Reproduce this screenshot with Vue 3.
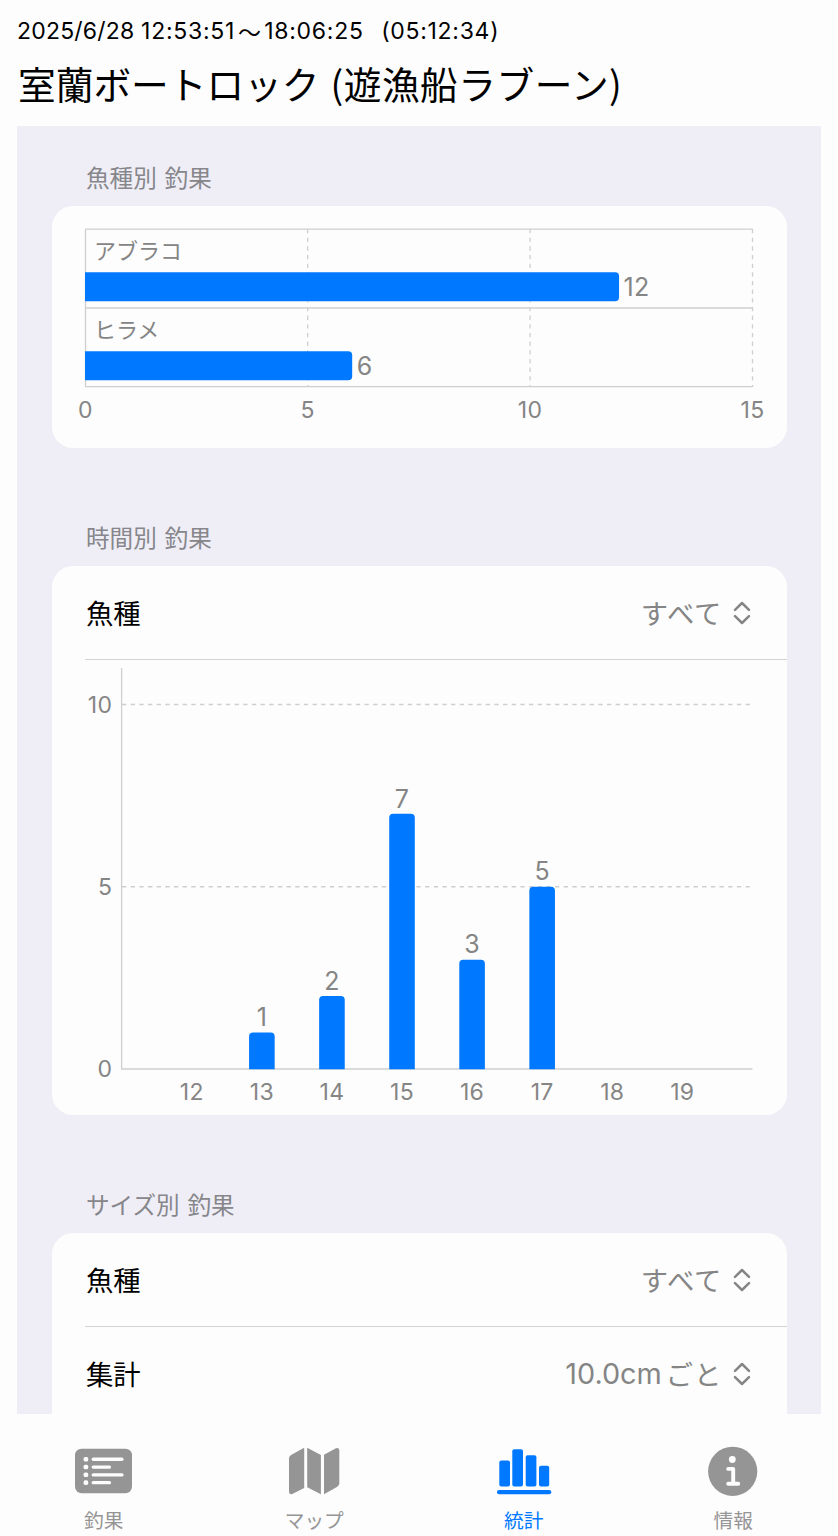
<template>
  <div class="page">

    <!-- Trip header -->
    <header class="header">
      <p class="period">
        <span>2025/6/28 </span><span class="time">12:53:51</span><span class="wave">〜</span><span class="time">18:06:25</span>
        <span class="time duration">(05:12:34)</span>
      </p>
      <h1 class="title">室蘭ボートロック <span class="boat">(遊漁船ラブーン)</span></h1>
    </header>

    <!-- Statistics -->
    <main class="panel">
      <h2 class="sectionTitle sectionTitleFirst">魚種別 釣果</h2>
      <section class="card">
        <svg class="chart" width="735" height="242" viewBox="0 0 735 242">
          <line
            v-for="t in [5, 10, 15]"
            :key="'g' + t"
            :x1="speciesX(t)"
            :x2="speciesX(t)"
            y1="23"
            y2="181"
            class="dash"
          />
          <path d="M33.5 23.2H700.5M33.5 102H700.5M33.5 180.7H700.5M33.5 23.2V180.7" class="rule" />
          <g v-for="(s, i) in species" :key="s.name">
            <text x="42" :y="53 + i * 79" class="cjk speciesName">{{ s.name }}</text>
            <path :d="hBar(s.count, 66.2 + i * 79)" class="bar" />
            <text :x="speciesX(s.count) + 4.5" :y="90 + i * 79" class="value">{{ s.count }}</text>
          </g>
          <text
            v-for="t in [0, 5, 10, 15]"
            :key="'t' + t"
            :x="speciesX(t)"
            y="211.5"
            class="tick middle"
          >{{ t }}</text>
        </svg>
      </section>

      <h2 class="sectionTitle">時間別 釣果</h2>
      <section class="card">
        <div class="row rowLine">
          <span class="rowLabel">魚種</span>
          <button class="picker">
            <span class="kana">すべて</span>
            <svg class="chevrons" width="18" height="24" viewBox="0 0 18 24">
              <path d="M2 8.8 9 2l7 6.8M2 15.2 9 22l7-6.8" />
            </svg>
          </button>
        </div>
        <svg class="chart" width="735" height="455" viewBox="0 0 735 455">
          <g v-for="t in [0, 5, 10]" :key="'y' + t">
            <line v-if="t" x1="70" x2="698" :y1="hourY(t)" :y2="hourY(t)" class="dash" />
            <text x="60.3" :y="hourY(t) + 8.3" class="tick end">{{ t }}</text>
          </g>
          <path d="M69.6 8V409H700.5" class="rule" />
          <g v-for="(h, i) in hours" :key="h.hour">
            <path v-if="h.count" :d="vBar(h.count, hourX(i))" class="bar" />
            <text v-if="h.count" :x="hourX(i)" :y="hourY(h.count) - 6.3" class="value middle">{{ h.count }}</text>
            <text :x="hourX(i)" y="440" class="tick middle">{{ h.hour }}</text>
          </g>
        </svg>
      </section>

      <h2 class="sectionTitle">サイズ別 釣果</h2>
      <section class="card cardOpen">
        <div class="row rowLine">
          <span class="rowLabel">魚種</span>
          <button class="picker">
            <span class="kana">すべて</span>
            <svg class="chevrons" width="18" height="24" viewBox="0 0 18 24">
              <path d="M2 8.8 9 2l7 6.8M2 15.2 9 22l7-6.8" />
            </svg>
          </button>
        </div>
        <div class="row">
          <span class="rowLabel">集計</span>
          <button class="picker">
            <span class="latin">10.0cm</span>
            <span class="kana">ごと</span>
            <svg class="chevrons" width="18" height="24" viewBox="0 0 18 24">
              <path d="M2 8.8 9 2l7 6.8M2 15.2 9 22l7-6.8" />
            </svg>
          </button>
        </div>
      </section>
    </main>

    <!-- Tab bar -->
    <nav class="tabs">
      <button
        v-for="tab in tabs"
        :key="tab.id"
        :class="['tab', active === tab.id ? 'tabActive' : '']"
        @click="active = tab.id"
      >
        <svg v-if="tab.id === 'list'" width="58" height="54" viewBox="0 0 58 54">
          <rect x="0" y="4.7" width="57" height="44.5" rx="6.5" fill="currentColor" />
          <g fill="#fdfdfd">
            <rect v-for="n in 4" :key="'d' + n" x="8.6" :y="5.1 + n * 7.8" width="4.6" height="4.6" rx="1.6" />
            <rect v-for="n in 4" :key="'l' + n" x="16.6" :y="5.8 + n * 7.8" :width="n % 2 ? 32 : 19.5" height="3.3" rx="1.6" />
          </g>
        </svg>
        <svg v-else-if="tab.id === 'map'" width="58" height="54" viewBox="0 0 58 54">
          <g fill="currentColor">
            <path d="M19.2 3.7V43.9L7.2 49.9Q4 50.9 4 47.7V14.5Q4 12.1 6 11Z" />
            <path d="M22.2 3.7 35.9 10.9V50.3L22.2 43.3Z" />
            <path d="M39 10.8 51 4.2Q54.3 3.2 54.3 6.5V39.2Q54.3 41.5 52.3 42.7L39 50.3Z" />
          </g>
        </svg>
        <svg v-else-if="tab.id === 'stats'" width="58" height="54" viewBox="0 0 58 54">
          <g fill="currentColor">
            <rect x="4.3" y="16.5" width="10.7" height="26" rx="2" />
            <rect x="17.3" y="5.3" width="10.7" height="37.2" rx="2" />
            <rect x="30.7" y="11.2" width="10.7" height="31.3" rx="2" />
            <rect x="44" y="21.8" width="10.2" height="20.7" rx="2" />
            <rect x="2" y="46" width="54.3" height="4.3" rx="2.1" />
          </g>
        </svg>
        <svg v-else width="58" height="54" viewBox="0 0 58 54">
          <circle cx="28.7" cy="27.3" r="24.6" fill="currentColor" />
          <circle cx="28.3" cy="15.5" r="3.4" fill="#fdfdfd" />
          <path
            d="M24.2 24.9H29.2V39.8M24.2 39.8H34.2"
            fill="none"
            stroke="#fdfdfd"
            stroke-width="3.9"
            stroke-linecap="round"
            stroke-linejoin="round"
          />
        </svg>
        <span class="tabLabel">{{ tab.label }}</span>
      </button>
    </nav>

  </div>
</template>

<script setup>
import { ref } from 'vue'

const active = ref('stats')

const tabs = [
  { id: 'list', label: '釣果' },
  { id: 'map', label: 'マップ' },
  { id: 'stats', label: '統計' },
  { id: 'info', label: '情報' },
]

const species = [
  { name: 'アブラコ', count: 12 },
  { name: 'ヒラメ', count: 6 },
]

const hours = [
  { hour: 12, count: 0 },
  { hour: 13, count: 1 },
  { hour: 14, count: 2 },
  { hour: 15, count: 7 },
  { hour: 16, count: 3 },
  { hour: 17, count: 5 },
  { hour: 18, count: 0 },
  { hour: 19, count: 0 },
]

const speciesX = (n) => 33.3 + n * 44.48
const hourX = (i) => 139.8 + i * 70.07
const hourY = (n) => 409 - n * 36.45

// bars are rounded only at the value end
function hBar(count, y) {
  const x = speciesX(count)
  return `M33 ${y}H${x - 4}q4 0 4 4v21q0 4 -4 4H33Z`
}

function vBar(count, x) {
  const y = hourY(count)
  return `M${x - 12.8} 409.3V${y + 4}q0 -4 4 -4h17.6q4 0 4 4V409.3Z`
}
</script>

<style>
body {
  margin: 0;
  background: #fdfdfd;
}
</style>

<style scoped>
.page {
  display: flex;
  flex-direction: column;
  height: 1536px;
  overflow: hidden;
  background: #fdfdfd;
  color: #000;
  font-family: 'Inter', 'Noto Sans CJK JP', sans-serif;
}

/* ─── Header ─────────────────────────────────────────────── */
.header {
  box-sizing: border-box;
  height: 126px;
  flex: none;
  padding: 17px 17px 0;
}

.period {
  display: flex;
  margin: 0;
  font-size: 23px;
  line-height: 28px;
  letter-spacing: 0.2px;
  white-space: pre;
}
.time { letter-spacing: 0.72px; }
.wave {
  margin: 0 3px;
  font-family: 'Noto Sans CJK JP', sans-serif;
}
.duration { margin-left: 17.5px; }

.title {
  margin: 10px 0 0 1px;
  font-family: 'Noto Sans CJK JP', sans-serif;
  font-size: 37.7px;
  font-weight: 400;
  line-height: 56px;
  white-space: nowrap;
  word-spacing: 2.5px;
}
.boat { letter-spacing: 0.5px; }

/* ─── Panel and cards ────────────────────────────────────── */
.panel {
  flex: 1;
  min-height: 0;
  overflow: hidden;
  margin: 0 17px;
  padding: 0 34px 0 35px;
  background: #efeef6;
}

.sectionTitle {
  box-sizing: border-box;
  display: flex;
  align-items: flex-end;
  height: 118px;
  margin: 0;
  padding: 0 0 16px 34px;
  color: #86868b;
  font-family: 'Noto Sans CJK JP', sans-serif;
  font-size: 23.6px;
  font-weight: 400;
  line-height: 26px;
  word-spacing: 2.5px;
}
.sectionTitleFirst { height: 80px; }

.card {
  overflow: hidden;
  border-radius: 21px;
  background: #fdfdfd;
}
.cardOpen { border-radius: 21px 21px 0 0; height: 200px; }

.row {
  display: flex;
  align-items: center;
  justify-content: space-between;
  height: 93px;
  margin-left: 33px;
  padding-right: 36px;
}
.rowLine { border-bottom: 1px solid #d3d3d5; }

.rowLabel {
  padding: 0 0 2px 1px;
  font-family: 'Noto Sans CJK JP', sans-serif;
  font-size: 27.3px;
  line-height: 40px;
}

.picker {
  display: flex;
  align-items: center;
  padding: 0;
  border: 0;
  background: none;
  color: #858585;
  font-size: 27.3px;
  line-height: 40px;
}
.kana {
  padding-bottom: 2px;
  font-family: 'Noto Sans CJK JP', sans-serif;
  letter-spacing: 0.8px;
}
.latin {
  margin-right: 4px;
  font-family: 'Inter', sans-serif;
  font-size: 28.8px;
}
.chevrons {
  margin-left: 11px;
  fill: none;
  stroke: currentColor;
  stroke-width: 2.5;
  stroke-linecap: round;
  stroke-linejoin: round;
}

/* ─── Charts ─────────────────────────────────────────────── */
.chart {
  display: block;
  fill: #858585;
  font-family: 'Inter', sans-serif;
}
.rule { fill: none; stroke: #cfcfcf; stroke-width: 1.3; }
.dash { stroke: #cfcfcf; stroke-width: 1.3; stroke-dasharray: 4.33; }
.bar { fill: #0078ff; }
.tick { font-size: 23px; letter-spacing: 0.3px; }
.value { font-size: 25px; letter-spacing: 0.3px; }
.cjk { font-family: 'Noto Sans CJK JP', sans-serif; }
.speciesName { font-size: 22px; }
.middle { text-anchor: middle; }
.end { text-anchor: end; }

/* ─── Tab bar ────────────────────────────────────────────── */
.tabs {
  display: grid;
  grid-template-columns: repeat(4, 209.5px);
  flex: none;
  height: 122px;
}

.tab {
  display: flex;
  flex-direction: column;
  align-items: center;
  padding: 30px 0 0;
  border: 0;
  background: none;
  color: #959595;
  cursor: pointer;
}
.tab:first-child { padding-right: 2px; }
.tabActive { color: #0078ff; }

.tabLabel {
  margin-top: 8px;
  font-family: 'Noto Sans CJK JP', sans-serif;
  font-size: 19.7px;
  line-height: 28px;
}
</style>
